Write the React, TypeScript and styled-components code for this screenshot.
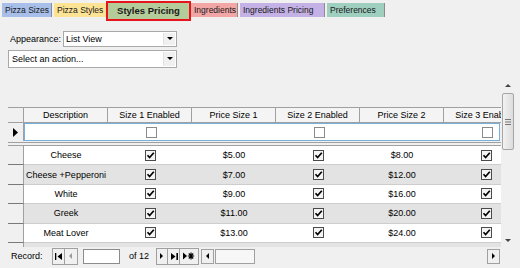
import React from "react";
import styled, { createGlobalStyle } from "styled-components";

const GlobalStyle = createGlobalStyle`
  html, body {
    margin: 0;
    padding: 0;
    background: #f0f0f0;
  }
  body {
    font-family: "Liberation Sans", Arial, sans-serif;
    font-size: 9px;
    color: #000;
  }
`;

const Screen = styled.div`
  width: 520px;
  height: 268px;
  display: flex;
  flex-direction: column;
  overflow: hidden;
`;

const TabStrip = styled.div`
  display: flex;
  align-items: flex-start;
  height: 21px;
  padding: 1px 0 0 2px;
  box-sizing: border-box;
`;

const Tab = styled.div<{ $bg: string; $w: number; $active?: boolean }>`
  position: relative;
  flex: none;
  width: ${({ $w }) => $w}px;
  height: ${({ $active }) => ($active ? 20 : 14)}px;
  margin-top: ${({ $active }) => ($active ? 0 : 2)}px;
  margin-left: ${({ $active }) => ($active ? -4 : 2)}px;
  margin-right: ${({ $active }) => ($active ? -2 : 0)}px;
  box-sizing: border-box;
  background: ${({ $bg }) => $bg};
  border: ${({ $active }) => ($active ? "2px solid #e8141c" : "none")};
  border-right: ${({ $active }) =>
    $active ? "2px solid #e8141c" : "1px solid #8c8c8c"};
  padding-left: ${({ $active }) => ($active ? 0 : 3)}px;
  text-align: ${({ $active }) => ($active ? "center" : "left")};
  font-size: ${({ $active }) => ($active ? 9.5 : 8.5)}px;
  font-weight: ${({ $active }) => ($active ? 700 : 400)};
  line-height: ${({ $active }) => ($active ? 15 : 14)}px;
  white-space: nowrap;
  overflow: hidden;
  z-index: ${({ $active }) => ($active ? 1 : 0)};
  color: #1a1a1a;

  &:first-child {
    margin-left: 0;
  }
`;

const HeaderSection = styled.div`
  height: 59px;
  display: flex;
  flex-direction: column;
  padding: 10px 0 0 8px;
  box-sizing: border-box;
`;

const FilterRow = styled.div`
  display: flex;
  align-items: center;
  height: 16px;
`;

const Label = styled.span`
  width: 55px;
  padding-left: 2px;
  box-sizing: border-box;
  flex: none;
`;

const Combo = styled.div<{ $w: number; $h: number }>`
  width: ${({ $w }) => $w}px;
  height: ${({ $h }) => $h}px;
  box-sizing: border-box;
  background: #fff;
  border: 1px solid #a9a9a9;
  display: flex;
  align-items: center;
  padding-left: 2px;
`;

const ComboText = styled.span`
  flex: 1;
  white-space: nowrap;
`;

const ComboButton = styled.span`
  width: 11px;
  align-self: stretch;
  margin: 1px;
  background: #f0f0f0;
  border-left: 1px solid #e2e2e2;
  display: flex;
  align-items: center;
  justify-content: center;
`;

const ActionCombo = styled(Combo)`
  margin-top: 3px;
  padding-left: 3px;
`;

const Body = styled.div`
  display: flex;
  height: 167px;
  padding-right: 5px;
`;

const Main = styled.div`
  flex: 1;
  min-width: 0;
  padding: 27px 0 0 8px;
  overflow: hidden;
`;

const Grid = styled.div`
  width: 493px;
  height: 140px;
  overflow: hidden;
`;

const HeaderRow = styled.div`
  display: flex;
  height: 16px;
  box-sizing: border-box;
  border-top: 1px solid #a0a0a0;
  border-bottom: 1px solid #a0a0a0;
  background: #f4f4f4;
`;

const Selector = styled.div<{ $divider?: boolean }>`
  flex: none;
  width: 16px;
  box-sizing: border-box;
  border-right: 1px solid #a0a0a0;
  border-bottom: ${({ $divider }) => ($divider ? "1px solid #7a7a7a" : "none")};
  display: flex;
  align-items: center;
  padding-left: 5px;
  background: #f0f0f0;
`;

const HeaderCell = styled.div`
  flex: none;
  width: 84px;
  box-sizing: border-box;
  border-right: 1px solid #a0a0a0;
  text-align: center;
  line-height: 14px;
  white-space: nowrap;
  overflow: hidden;
`;

const NewRow = styled.div`
  display: flex;
  height: 18px;
`;

const NewCells = styled.div`
  flex: none;
  width: 476px;
  box-sizing: border-box;
  border: 1px solid #7aaedc;
  background: #fff;
  display: flex;
  overflow: hidden;
`;

const Separator = styled.div`
  height: 4px;
  box-sizing: border-box;
  border-top: 1px solid #a0a0a0;
  border-bottom: 1px solid #a0a0a0;
  margin-top: 1px;
`;

const DataRow = styled.div`
  display: flex;
  height: 19.4px;
`;

const DataCells = styled.div<{ $shade: boolean }>`
  display: flex;
  flex: none;
  box-sizing: border-box;
  background: ${({ $shade }) => ($shade ? "#e3e3e3" : "#fff")};
  border-bottom: 1px solid #cdcdcd;
`;

const Cell = styled.div`
  flex: none;
  width: 84px;
  display: flex;
  align-items: center;
  justify-content: center;
  white-space: nowrap;
`;

const Box = styled.span<{ $checked?: boolean }>`
  width: 11px;
  height: 11px;
  box-sizing: border-box;
  border: 1px solid ${({ $checked }) => ($checked ? "#4a4a4a" : "#8a8a8a")};
  background: ${({ $checked }) => ($checked ? "#f4f4f4" : "#fff")};
  display: flex;
  align-items: center;
  justify-content: center;
`;

const VScroll = styled.div`
  width: 14px;
  flex: none;
  display: flex;
  flex-direction: column;
  align-items: center;
`;

const ArrowSlot = styled.div`
  height: 12px;
  width: 14px;
  display: flex;
  align-items: center;
  justify-content: center;
`;

const VThumb = styled.div`
  width: 12px;
  height: 57px;
  margin-top: 1px;
  box-sizing: border-box;
  border: 1px solid #a6a6a6;
  border-radius: 2px;
  background: linear-gradient(to right, #f2f2f2, #dcdcdc);
  display: flex;
  align-items: center;
  justify-content: center;
`;

const Track = styled.div`
  flex: 1;
`;

const NavBar = styled.div`
  height: 18px;
  display: flex;
  align-items: center;
  padding-left: 11px;
  padding-right: 20px;
`;

const NavLabel = styled.span`
  width: 41px;
  flex: none;
`;

const ButtonGroup = styled.div`
  display: flex;
  height: 15px;
  border: 1px solid #a0a0a0;
  background: #f0f0f0;
`;

const NavButton = styled.span<{ $w: number }>`
  width: ${({ $w }) => $w}px;
  box-sizing: border-box;
  border-right: 1px solid #a0a0a0;
  display: flex;
  align-items: center;
  justify-content: center;

  &:last-child {
    border-right: none;
  }
`;

const RecordBox = styled.div`
  width: 37px;
  height: 15px;
  box-sizing: border-box;
  margin-left: 5px;
  border: 1px solid #8c8c8c;
  background: #fff;
`;

const OfCount = styled.span`
  margin: 0 7px 0 9px;
`;

const HScroll = styled.div`
  display: flex;
  margin-left: 2px;
  flex: 1;
  height: 15px;
`;

const HThumb = styled.div`
  width: 40px;
  box-sizing: border-box;
  border: 1px solid #a0a0a0;
  background: #f7f7f7;
  margin-left: 1px;
`;

const HArrow = styled.div`
  width: 13px;
  box-sizing: border-box;
  border: 1px solid #a0a0a0;
  display: flex;
  align-items: center;
  justify-content: center;
`;

type Row = { name: string; p1: number; p2: number };

const rows: Row[] = [
  { name: "Cheese", p1: 5, p2: 8 },
  { name: "Cheese +Pepperoni", p1: 7, p2: 12 },
  { name: "White", p1: 9, p2: 16 },
  { name: "Greek", p1: 11, p2: 20 },
  { name: "Meat Lover", p1: 13, p2: 24 },
  { name: "California", p1: 15, p2: 28 },
];

const columns = [
  "Description",
  "Size 1 Enabled",
  "Price Size 1",
  "Size 2 Enabled",
  "Price Size 2",
  "Size 3 Enabled",
];

const tabs = [
  { label: "Pizza Sizes", bg: "#a7bfe9", w: 50 },
  { label: "Pizza Styles", bg: "#fde394", w: 56 },
  { label: "Styles Pricing", bg: "#b4cb9a", w: 85, active: true },
  { label: "Ingredients", bg: "#f2a6a6", w: 47 },
  { label: "Ingredients Pricing", bg: "#c4b1e6", w: 85 },
  { label: "Preferences", bg: "#9fcfbf", w: 58 },
];

const Tri = ({ dir, color = "#000" }: { dir: "up" | "down" | "left" | "right"; color?: string }) => {
  const d = {
    up: "M0 4 L3 1 L6 4 Z",
    down: "M0 1 L3 4 L6 1 Z",
    left: "M4 0 L1 3 L4 6 Z",
    right: "M1 0 L4 3 L1 6 Z",
  }[dir];
  return (
    <svg width="6" height="6" viewBox="0 0 6 6">
      <path d={d} fill={color} />
    </svg>
  );
};

const Check = ({ checked }: { checked?: boolean }) => (
  <Box $checked={checked}>
    {checked && (
      <svg width="9" height="9" viewBox="0 0 9 9">
        <path d="M1.5 4.2 L3.6 6.5 L7.8 1.8" stroke="#000" strokeWidth="1.7" fill="none" />
      </svg>
    )}
  </Box>
);

const money = (n: number) => `$${n.toFixed(2)}`;

const App = () => {
  return (
    <Screen>
      <GlobalStyle />
      <TabStrip>
        {tabs.map((t) => (
          <Tab key={t.label} $bg={t.bg} $w={t.w} $active={t.active}>
            {t.label}
          </Tab>
        ))}
      </TabStrip>

      <HeaderSection>
        <FilterRow>
          <Label>Appearance:</Label>
          <Combo $w={114} $h={16}>
            <ComboText>List View</ComboText>
            <ComboButton>
              <Tri dir="down" />
            </ComboButton>
          </Combo>
        </FilterRow>
        <ActionCombo $w={169} $h={18}>
          <ComboText>Select an action...</ComboText>
          <ComboButton>
            <Tri dir="down" />
          </ComboButton>
        </ActionCombo>
      </HeaderSection>

      <Body>
        <Main>
          <Grid>
            <HeaderRow>
              <Selector />
              {columns.map((c) => (
                <HeaderCell key={c}>{c}</HeaderCell>
              ))}
            </HeaderRow>
            <NewRow>
              <Selector>
                <svg width="6" height="9" viewBox="0 0 6 9">
                  <path d="M0 0 L5 4.5 L0 9 Z" fill="#000" />
                </svg>
              </Selector>
              <NewCells>
                <Cell />
                <Cell>
                  <Check />
                </Cell>
                <Cell />
                <Cell>
                  <Check />
                </Cell>
                <Cell />
                <Cell>
                  <Check />
                </Cell>
              </NewCells>
            </NewRow>
            <Separator />
            {rows.map((r, i) => (
              <DataRow key={r.name}>
                <Selector $divider />
                <DataCells $shade={i % 2 === 1}>
                  <Cell>{r.name}</Cell>
                  <Cell>
                    <Check checked />
                  </Cell>
                  <Cell>{money(r.p1)}</Cell>
                  <Cell>
                    <Check checked />
                  </Cell>
                  <Cell>{money(r.p2)}</Cell>
                  <Cell>
                    <Check checked />
                  </Cell>
                </DataCells>
              </DataRow>
            ))}
          </Grid>
        </Main>
        <VScroll>
          <ArrowSlot>
            <Tri dir="up" color="#444" />
          </ArrowSlot>
          <VThumb>
            <svg width="6" height="6" viewBox="0 0 6 6">
              <path d="M0 0.5 H6 M0 3 H6 M0 5.5 H6" stroke="#777" strokeWidth="1" />
            </svg>
          </VThumb>
          <Track />
          <ArrowSlot>
            <Tri dir="down" color="#444" />
          </ArrowSlot>
        </VScroll>
      </Body>

      <NavBar>
        <NavLabel>Record:</NavLabel>
        <ButtonGroup>
          <NavButton $w={12}>
            <svg width="8" height="7" viewBox="0 0 8 7">
              <path d="M0.5 0 V7" stroke="#000" strokeWidth="1.6" />
              <path d="M7 0 L2.5 3.5 L7 7 Z" fill="#000" />
            </svg>
          </NavButton>
          <NavButton $w={12}>
            <Tri dir="left" color="#9a9a9a" />
          </NavButton>
        </ButtonGroup>
        <RecordBox />
        <OfCount>of 12</OfCount>
        <ButtonGroup>
          <NavButton $w={11}>
            <Tri dir="right" />
          </NavButton>
          <NavButton $w={12}>
            <svg width="8" height="7" viewBox="0 0 8 7">
              <path d="M1 0 L5.5 3.5 L1 7 Z" fill="#000" />
              <path d="M7.2 0 V7" stroke="#000" strokeWidth="1.6" />
            </svg>
          </NavButton>
          <NavButton $w={18}>
            <svg width="12" height="8" viewBox="0 0 12 8">
              <path d="M0 0.5 L4 4 L0 7.5 Z" fill="#000" />
              <path d="M8 0.5 V7.5 M4.8 4 H11.2 M5.8 1.5 L10.2 6.5 M10.2 1.5 L5.8 6.5" stroke="#000" strokeWidth="1.2" />
            </svg>
          </NavButton>
        </ButtonGroup>
        <HScroll>
          <HArrow>
            <Tri dir="left" />
          </HArrow>
          <HThumb />
          <Track />
          <HArrow>
            <Tri dir="right" />
          </HArrow>
        </HScroll>
      </NavBar>
    </Screen>
  );
};

export default App;
